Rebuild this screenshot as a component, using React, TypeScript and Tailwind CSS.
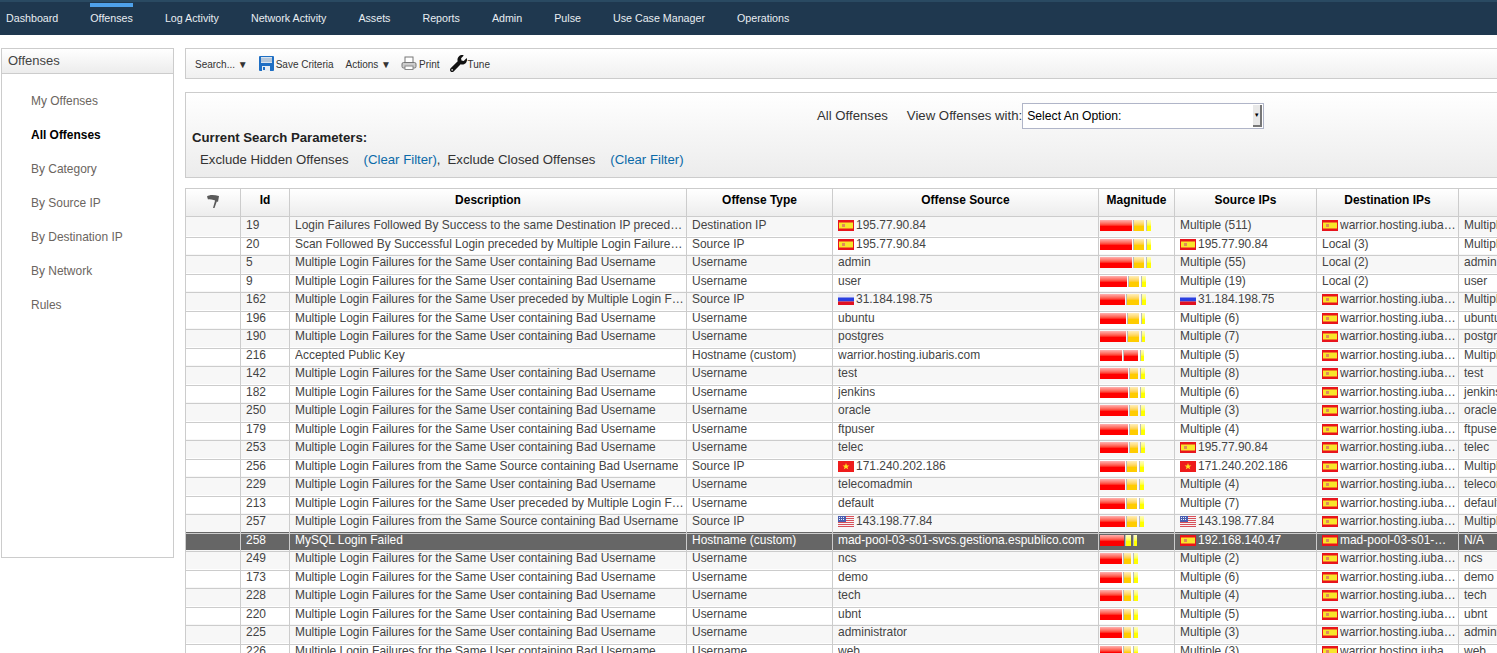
import { FaWrench } from "react-icons/fa";

const navItems = ["Dashboard", "Offenses", "Log Activity", "Network Activity", "Assets", "Reports", "Admin", "Pulse", "Use Case Manager", "Operations"];
const sideItems = ["My Offenses", "All Offenses", "By Category", "By Source IP", "By Destination IP", "By Network", "Rules"];

const BAD = "Multiple Login Failures for the Same User containing Bad Username";
const PRE = "Multiple Login Failures for the Same User preceded by Multiple Login Failures";
const SRC = "Multiple Login Failures from the Same Source containing Bad Username";
const W = "warrior.hosting.iubaris.com";

type Flag = "es" | "ru" | "vn" | "us" | null;
type Row = { id: string; desc: string; type: string; srcFlag?: Flag; src: string; mag: [number, number, number]; ipFlag?: Flag; ips: string; dstFlag?: Flag; dst: string; last: string };

const rows: Row[] = [
  { id: "19", desc: "Login Failures Followed By Success to the same Destination IP preceded by Multiple", type: "Destination IP", srcFlag: "es", src: "195.77.90.84", mag: [32, 10, 4], ips: "Multiple (511)", dstFlag: "es", dst: W, last: "Multiple" },
  { id: "20", desc: "Scan Followed By Successful Login preceded by Multiple Login Failures from", type: "Source IP", srcFlag: "es", src: "195.77.90.84", mag: [32, 10, 4], ipFlag: "es", ips: "195.77.90.84", dst: "Local (3)", last: "Multiple" },
  { id: "5", desc: BAD, type: "Username", src: "admin", mag: [32, 10, 4], ips: "Multiple (55)", dst: "Local (2)", last: "admin" },
  { id: "9", desc: BAD, type: "Username", src: "user", mag: [27, 10, 4], ips: "Multiple (19)", dst: "Local (2)", last: "user" },
  { id: "162", desc: PRE, type: "Source IP", srcFlag: "ru", src: "31.184.198.75", mag: [25, 12, 4], ipFlag: "ru", ips: "31.184.198.75", dstFlag: "es", dst: W, last: "Multiple" },
  { id: "196", desc: BAD, type: "Username", src: "ubuntu", mag: [26, 11, 3], ips: "Multiple (6)", dstFlag: "es", dst: W, last: "ubuntu" },
  { id: "190", desc: BAD, type: "Username", src: "postgres", mag: [26, 11, 3], ips: "Multiple (7)", dstFlag: "es", dst: W, last: "postgres" },
  { id: "216", desc: "Accepted Public Key", type: "Hostname (custom)", src: W, mag: [22, 14, 3], ips: "Multiple (5)", dstFlag: "es", dst: W, last: "Multiple" },
  { id: "142", desc: BAD, type: "Username", src: "test", mag: [28, 8, 4], ips: "Multiple (8)", dstFlag: "es", dst: W, last: "test" },
  { id: "182", desc: BAD, type: "Username", src: "jenkins", mag: [28, 8, 4], ips: "Multiple (6)", dstFlag: "es", dst: W, last: "jenkins" },
  { id: "250", desc: BAD, type: "Username", src: "oracle", mag: [28, 8, 4], ips: "Multiple (3)", dstFlag: "es", dst: W, last: "oracle" },
  { id: "179", desc: BAD, type: "Username", src: "ftpuser", mag: [28, 8, 4], ips: "Multiple (4)", dstFlag: "es", dst: W, last: "ftpuser" },
  { id: "253", desc: BAD, type: "Username", src: "telec", mag: [28, 8, 4], ipFlag: "es", ips: "195.77.90.84", dstFlag: "es", dst: W, last: "telec" },
  { id: "256", desc: SRC, type: "Source IP", srcFlag: "vn", src: "171.240.202.186", mag: [25, 10, 4], ipFlag: "vn", ips: "171.240.202.186", dstFlag: "es", dst: W, last: "Multiple" },
  { id: "229", desc: BAD, type: "Username", src: "telecomadmin", mag: [25, 10, 4], ips: "Multiple (4)", dstFlag: "es", dst: W, last: "telecomadmin" },
  { id: "213", desc: PRE, type: "Username", src: "default", mag: [25, 10, 4], ips: "Multiple (7)", dstFlag: "es", dst: W, last: "default" },
  { id: "257", desc: SRC, type: "Source IP", srcFlag: "us", src: "143.198.77.84", mag: [25, 10, 4], ipFlag: "us", ips: "143.198.77.84", dstFlag: "es", dst: W, last: "Multiple" },
  { id: "258", desc: "MySQL Login Failed", type: "Hostname (custom)", src: "mad-pool-03-s01-svcs.gestiona.espublico.com", mag: [24, 5, 3], ipFlag: "es", ips: "192.168.140.47", dstFlag: "es", dst: "mad-pool-03-s01-…", last: "N/A" },
  { id: "249", desc: BAD, type: "Username", src: "ncs", mag: [22, 7, 4], ips: "Multiple (2)", dstFlag: "es", dst: W, last: "ncs" },
  { id: "173", desc: BAD, type: "Username", src: "demo", mag: [22, 7, 4], ips: "Multiple (6)", dstFlag: "es", dst: W, last: "demo" },
  { id: "228", desc: BAD, type: "Username", src: "tech", mag: [22, 7, 4], ips: "Multiple (4)", dstFlag: "es", dst: W, last: "tech" },
  { id: "220", desc: BAD, type: "Username", src: "ubnt", mag: [22, 7, 4], ips: "Multiple (5)", dstFlag: "es", dst: W, last: "ubnt" },
  { id: "225", desc: BAD, type: "Username", src: "administrator", mag: [22, 7, 4], ips: "Multiple (3)", dstFlag: "es", dst: W, last: "administrator" },
  { id: "226", desc: BAD, type: "Username", src: "web", mag: [22, 7, 4], ips: "Multiple (3)", dstFlag: "es", dst: W, last: "web" },
];

function FlagIcon({ code }: { code: Flag }) {
  if (code === "es")
    return (
      <svg width="16" height="11" viewBox="0 0 16 11" className="shrink-0">
        <rect width="16" height="11" fill="#e8141c" />
        <rect x="1" y="2.500" width="14" height="6" fill="#f8e62a" />
        <rect x="4" y="4" width="3" height="3" fill="#e08a5a" />
      </svg>
    );
  if (code === "ru")
    return (
      <svg width="16" height="11" viewBox="0 0 16 11" className="shrink-0">
        <rect width="16" height="11" fill="#e8e8f4" />
        <rect y="3.500" width="16" height="4" fill="#2a3fe0" />
        <rect y="7.500" width="16" height="3.500" fill="#e01020" />
      </svg>
    );
  if (code === "vn")
    return (
      <svg width="16" height="11" viewBox="0 0 16 11" className="shrink-0">
        <rect width="16" height="11" fill="#ee1c1c" />
        <path d="M8 2l.9 2.400h2.500l-2 1.500.8 2.400L8 6.900 5.800 8.300l.8-2.400-2-1.500h2.500z" fill="#ffe020" />
      </svg>
    );
  if (code === "us")
    return (
      <svg width="16" height="11" viewBox="0 0 16 11" className="shrink-0">
        <rect width="16" height="11" fill="#f4f4f4" />
        <path d="M0 .5h16M0 2.500h16M0 4.500h16M0 6.500h16M0 8.500h16M0 10.500h16" stroke="#d8505a" strokeWidth="1" />
        <rect width="8" height="6" fill="#4a5fb0" />
        <path d="M1 1.500h6M1 3.500h6" stroke="#e8ecf8" strokeDasharray="1 1" />
      </svg>
    );
  return null;
}

function Magnitude({ mag, id }: { mag: [number, number, number]; id: string }) {
  const second =
    id === "216"
      ? "from-[#ffb0b0] via-[#ff0000] via-55% to-[#ff0000]"
      : id === "258"
        ? "from-[#fffcc0] via-[#ffff00] via-55% to-[#ffff00]"
        : "from-[#ffeeb8] via-[#ffcc00] via-55% to-[#ffcc00]";
  return (
    <div className="flex h-[11px]">
      <div className="bg-gradient-to-b from-[#ffb0b0] via-[#ff0000] via-55% to-[#ff0000]" style={{ width: mag[0] }} />
      <div className={`ml-px border-l border-l-[#bbb] bg-gradient-to-b ${second}`} style={{ width: mag[1] + 1 }} />
      <div className="ml-[2px] border-l border-l-[#bbb] bg-gradient-to-b from-[#fffcc0] via-[#ffff00] via-55% to-[#ffff00]" style={{ width: mag[2] + 1 }} />
    </div>
  );
}

function Cell({ flag, text }: { flag?: Flag; text: string }) {
  return (
    <div className="flex min-w-0 items-center gap-0.5">
      {flag && <FlagIcon code={flag} />}
      <span className="truncate">{text}</span>
    </div>
  );
}

const cols = "grid grid-cols-[55px_49px_397px_146px_266px_76px_142px_142px_120px] w-[1393px]";
const headers = ["", "Id", "Description", "Offense Type", "Offense Source", "Magnitude", "Source IPs", "Destination IPs", ""];

export default function App() {
  return (
    <div className="h-[653px] w-[1497px] overflow-hidden bg-white font-['Liberation_Sans',Arial,sans-serif] text-[11.960px] text-[#444]">
      <nav className="flex h-[35px] gap-8 border-t-2 border-t-[#2a4a62] bg-[#1f384f] pl-1.5 text-[10.700px] text-[#e8edf2]">
        {navItems.map((item) => (
          <div key={item} className="relative pt-2">
            {item === "Offenses" && <div className="absolute left-0 right-0 top-px h-1 bg-[#4ea1ea]" />}
            {item}
          </div>
        ))}
      </nav>

      <div className="flex gap-[11px] pl-px pt-[13px]">
        <aside className="h-[510px] w-[173px] shrink-0 border border-[#ccc]">
          <div className="h-[25px] border-b border-[#ccc] bg-gradient-to-b from-white to-[#ececec] pl-1.5 pt-1 text-[13px] leading-4 text-[#444]">Offenses</div>
          <ul className="flex flex-col gap-5 pl-[29px] pt-[20px]">
            {sideItems.map((item) => (
              <li key={item} className={item === "All Offenses" ? "h-3.5 leading-[14px] font-bold text-black" : "h-3.5 leading-[14px] text-[#6b6560]"}>
                {item}
              </li>
            ))}
          </ul>
        </aside>

        <main className="min-w-0 flex-1">
          <div className="flex h-[31px] items-center border border-r-0 border-[#ccc] bg-gradient-to-b from-white to-[#f0f0f0] pl-[9px] pt-[2px] text-[10px] text-[#333]">
            <span>Search... ▼</span>
            <svg width="15" height="15" viewBox="0 0 15 15" className="ml-[11px] -translate-y-px">
              <rect width="15" height="15" rx="1" fill="#1f6fc4" />
              <rect x="2" y="1" width="11" height="6" fill="#d8e4f0" />
              <path d="M2 3h11M2 5h11" stroke="#8fa8c4" />
              <rect x="3" y="10" width="8" height="5" fill="#e8eef4" />
              <rect x="4" y="11" width="2" height="3" fill="#1f6fc4" />
            </svg>
            <span className="ml-[2px]">Save Criteria</span>
            <span className="ml-3">Actions ▼</span>
            <svg width="16" height="15" viewBox="0 0 16 15" className="ml-[10px] -translate-y-px">
              <rect x="4" y="1" width="8" height="6" fill="#fff" stroke="#777" />
              <rect x="1" y="6.500" width="14" height="5.500" rx="1.500" fill="#ccc" stroke="#777" />
              <rect x="4" y="10" width="8" height="3.500" fill="#fff" stroke="#888" />
            </svg>
            <span className="ml-[2px]">Print</span>
            <FaWrench className="ml-[10px] -translate-y-px text-[17px] text-[#111]" />
            <span className="ml-px">Tune</span>
          </div>

          <div className="mt-[13px] h-[86px] border border-r-0 border-[#ccc] bg-gradient-to-b from-white to-[#ececec] text-[13.200px] text-[#333]">
            <div className="flex items-center pl-[631px] pt-2.5">
              <span>All Offenses</span>
              <span className="ml-[19px]">View Offenses with:</span>
              <div className="flex h-[26px] w-[242px] items-center justify-between border border-[#b0b5c8] bg-white pl-1 pr-px text-[12.200px] text-black">
                Select An Option:
                <div className="flex h-[22px] w-[9px] items-center justify-center border-b-2 border-r-2 border-b-[#777] border-r-[#777] bg-[#e8e8e8] text-[6px]">▼</div>
              </div>
            </div>
            <div className="pl-1.5 pt-px text-[13.200px] font-bold leading-4 text-[#222]">Current Search Parameters:</div>
            <div className="flex pl-3.5 pt-1">
              <span>Exclude Hidden Offenses</span>
              <span className="ml-[15px] text-[#0b6aa8]">(Clear Filter)</span>
              <span>,</span>
              <span className="ml-[7px]">Exclude Closed Offenses</span>
              <span className="ml-[15px] text-[#0b6aa8]">(Clear Filter)</span>
            </div>
          </div>

          <div className="mt-2.5 border-l border-t border-[#ccc]">
            <div className={`${cols} h-[28px] bg-gradient-to-b from-white to-[#ececec]`}>
              {headers.map((h, i) => (
                <div key={i} className="flex items-center justify-center border-b border-r border-[#ccc] pb-[3px] font-bold text-black">
                  {i === 0 ? (
                    <svg width="14" height="14" viewBox="0 0 14 14">
                      <path d="M1 2.500 C3 .5 8 .5 13 2 L12 8 C9 6 4 5 2 5.500 Z M9.500 5 L11.500 5.500 L8.500 14 L7 14 Z" fill="#5a5a5a" />
                    </svg>
                  ) : (
                    h
                  )}
                </div>
              ))}
            </div>
            {rows.map((row, i) => {
              const selected = row.id === "258";
              const tone = selected ? "bg-[#666] text-white" : i % 2 === 0 ? "bg-[#f7f7f7]" : "bg-white";
              const cell = "flex min-w-0 items-center border-b border-r border-[#ccc] pb-[2px] pl-[5px]";
              return (
                <div key={row.id} className={`${cols} h-[18.500px] ${tone}`}>
                  <div className="border-b border-r border-[#ccc]" />
                  <div className={cell}>{row.id}</div>
                  <div className={cell}><span className="truncate">{row.desc}</span></div>
                  <div className={cell}>{row.type}</div>
                  <div className={cell}><Cell flag={row.srcFlag} text={row.src} /></div>
                  <div className="flex items-center border-b border-r border-[#ccc] pb-[2px] pl-px"><Magnitude mag={row.mag} id={row.id} /></div>
                  <div className={cell}><Cell flag={row.ipFlag} text={row.ips} /></div>
                  <div className={cell}><Cell flag={row.dstFlag} text={row.dst} /></div>
                  <div className="flex items-center border-b border-[#ccc] pb-[2px] pl-[5px]">{row.last}</div>
                </div>
              );
            })}
          </div>
        </main>
      </div>
    </div>
  );
}
